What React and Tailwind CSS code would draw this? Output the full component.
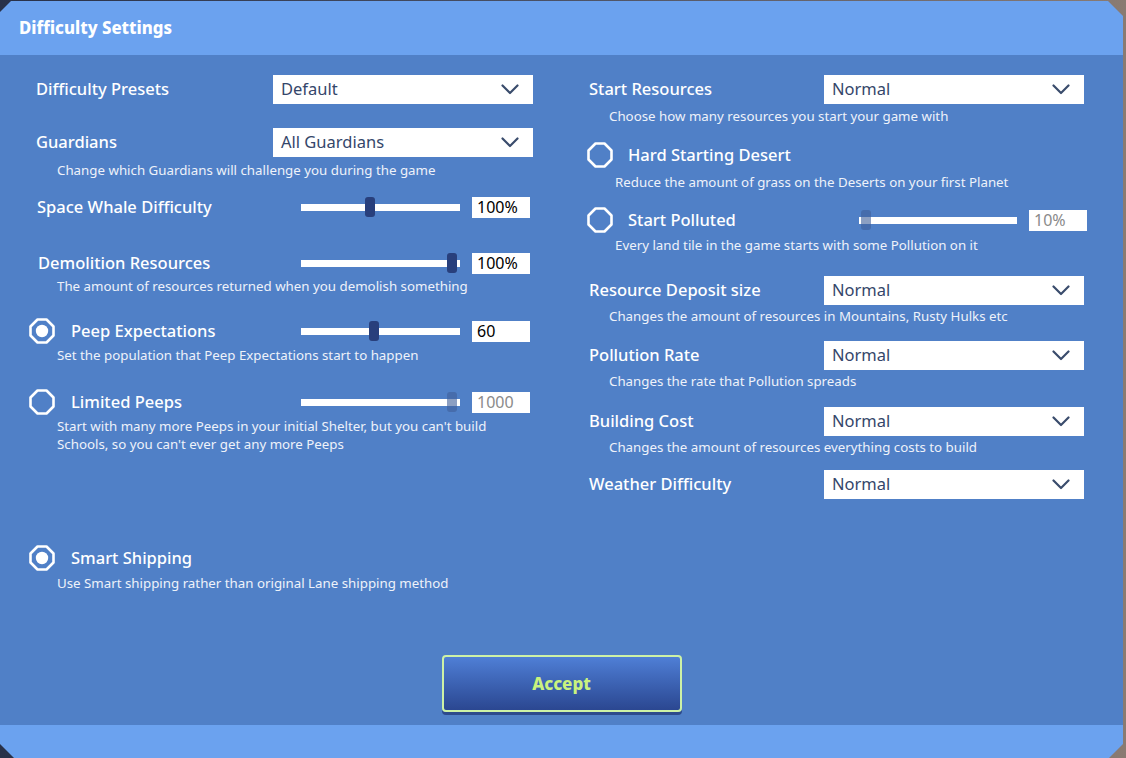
import React from 'react';

const FONT = { fontFamily: '"Noto Sans", "Open Sans", sans-serif' };

function Chevron() {
  return (
    <svg width="18" height="11" viewBox="0 0 18 11" className="shrink-0">
      <path d="M1.5 1.5 L9 9 L16.5 1.5" fill="none" stroke="#3a4c6c" strokeWidth="2.2" strokeLinecap="round" strokeLinejoin="round" />
    </svg>
  );
}

function Dropdown({ value }) {
  return (
    <div className="w-[260px] h-[29px] bg-white flex items-center justify-between pl-[8px] pr-[14px]">
      <span className="text-[16.5px] text-[#34466a]">{value}</span>
      <Chevron />
    </div>
  );
}

function Radio({ checked }) {
  return (
    <svg width="26" height="26" viewBox="0 0 26 26" className="shrink-0">
      <polygon points="8.5,1.5 17.5,1.5 24.5,8.5 24.5,17.5 17.5,24.5 8.5,24.5 1.5,17.5 1.5,8.5" fill="none" stroke="white" strokeWidth="2.6" strokeLinejoin="round" />
      {checked && <circle cx="13" cy="13" r="6.2" fill="white" />}
    </svg>
  );
}

function Slider({ pos, disabled, width = 159 }) {
  return (
    <div className="relative h-[22px] flex items-center" style={{ width }}>
      <div className="w-full h-[7px] bg-white" />
      <div
        className={
          'absolute top-[1px] w-[10px] h-[20px] rounded-[3px] ' +
          (disabled ? 'bg-[#3f5f9a]/60' : 'bg-[#283f7c]')
        }
        style={{ left: pos }}
      />
    </div>
  );
}

function ValueBox({ value, disabled }) {
  return (
    <div className="w-[58px] h-[21px] bg-white flex items-center pl-[5px]">
      <span className={'text-[16px] leading-none ' + (disabled ? 'text-[#8a8a8a]' : 'text-black')}>{value}</span>
    </div>
  );
}

function Desc({ children, className = '' }) {
  return <p className={'text-[13.3px] leading-[18px] text-[#eef2fa] ' + className}>{children}</p>;
}

const LABEL = 'text-[16.5px] font-medium';

export default function App() {
  return (
    <div className="w-[1126px] h-[758px] bg-gradient-to-r from-[#283149] via-[#4b5266] to-[#8a7b72] overflow-hidden" style={FONT}>
      <div className="w-[1123px] h-[758px] flex flex-col [clip-path:polygon(11px_1px,1108px_1px,1123px_16px,1123px_744px,1109px_758px,14px_758px,0_744px,0_12px)]">
        {/* Header */}
        <div className="h-[55px] bg-[#6ba2ef] flex items-center pl-[19px] shrink-0">
          <h1 className="text-[16.8px] font-extrabold text-white">Difficulty Settings</h1>
        </div>

        {/* Body */}
        <div className="flex-1 bg-[#5080c7] flex flex-col">
          <div className="h-[600px] flex">
            {/* Left column */}
            <div className="w-[586px] shrink-0 pl-[28px] pt-[20px] flex flex-col text-white">
              <div className="h-[29px] flex items-center">
                <span className={'w-[245px] pl-[8px] ' + LABEL}>Difficulty Presets</span>
                <Dropdown value="Default" />
              </div>

              <div className="h-[29px] mt-[24px] flex items-center">
                <span className={'w-[245px] pl-[8px] ' + LABEL}>Guardians</span>
                <Dropdown value="All Guardians" />
              </div>
              <Desc className="mt-[4px] pl-[29px]">Change which Guardians will challenge you during the game</Desc>

              <div className="h-[26px] mt-[15px] flex items-center">
                <span className={'w-[273px] pl-[9px] ' + LABEL}>Space Whale Difficulty</span>
                <Slider pos={64} />
                <div className="ml-[12px]"><ValueBox value="100%" /></div>
              </div>

              <div className="h-[26px] mt-[30px] flex items-center">
                <span className={'w-[273px] pl-[10px] ' + LABEL}>Demolition Resources</span>
                <Slider pos={146} />
                <div className="ml-[12px]"><ValueBox value="100%" /></div>
              </div>
              <Desc className="mt-[1px] pl-[29px]">The amount of resources returned when you demolish something</Desc>

              <div className="h-[26px] mt-[23px] flex items-center">
                <div className="w-[273px] flex items-center pl-[1px]">
                  <Radio checked />
                  <span className={'ml-[16px] ' + LABEL}>Peep Expectations</span>
                </div>
                <Slider pos={68} />
                <div className="ml-[12px]"><ValueBox value="60" /></div>
              </div>
              <Desc className="mt-[2px] pl-[29px]">Set the population that Peep Expectations start to happen</Desc>

              <div className="h-[26px] mt-[25px] flex items-center">
                <div className="w-[273px] flex items-center pl-[1px]">
                  <Radio />
                  <span className={'ml-[16px] ' + LABEL}>Limited Peeps</span>
                </div>
                <Slider pos={146} disabled />
                <div className="ml-[12px]"><ValueBox value="1000" disabled /></div>
              </div>
              <Desc className="mt-[2px] pl-[29px] w-[500px]">
                Start with many more Peeps in your initial Shelter, but you can't build Schools, so you can't ever get any more Peeps
              </Desc>

              <div className="h-[26px] mt-[92px] flex items-center pl-[1px]">
                <Radio checked />
                <span className={'ml-[16px] ' + LABEL}>Smart Shipping</span>
              </div>
              <Desc className="mt-[3px] pl-[29px]">Use Smart shipping rather than original Lane shipping method</Desc>
            </div>

            {/* Right column */}
            <div className="flex-1 pt-[20px] flex flex-col text-white">
              <div className="h-[29px] flex items-center">
                <span className={'w-[238px] pl-[3px] ' + LABEL}>Start Resources</span>
                <Dropdown value="Normal" />
              </div>
              <Desc className="mt-[3px] pl-[23px]">Choose how many resources you start your game with</Desc>

              <div className="h-[26px] mt-[17px] flex items-center pl-[1px]">
                <Radio />
                <span className={'ml-[15px] ' + LABEL}>Hard Starting Desert</span>
              </div>
              <Desc className="mt-[5px] pl-[29px]">Reduce the amount of grass on the Deserts on your first Planet</Desc>

              <div className="h-[26px] mt-[16px] flex items-center">
                <div className="w-[273px] flex items-center pl-[1px]">
                  <Radio />
                  <span className={'ml-[15px] ' + LABEL}>Start Polluted</span>
                </div>
                <Slider pos={2} width={158} disabled />
                <div className="ml-[12px]"><ValueBox value="10%" disabled /></div>
              </div>
              <Desc className="mt-[3px] pl-[29px]">Every land tile in the game starts with some Pollution on it</Desc>

              <div className="h-[29px] mt-[22px] flex items-center">
                <span className={'w-[238px] pl-[3px] ' + LABEL}>Resource Deposit size</span>
                <Dropdown value="Normal" />
              </div>
              <Desc className="mt-[2px] pl-[23px]">Changes the amount of resources in Mountains, Rusty Hulks etc</Desc>

              <div className="h-[29px] mt-[16px] flex items-center">
                <span className={'w-[238px] pl-[3px] ' + LABEL}>Pollution Rate</span>
                <Dropdown value="Normal" />
              </div>
              <Desc className="mt-[2px] pl-[23px]">Changes the rate that Pollution spreads</Desc>

              <div className="h-[29px] mt-[17px] flex items-center">
                <span className={'w-[238px] pl-[3px] ' + LABEL}>Building Cost</span>
                <Dropdown value="Normal" />
              </div>
              <Desc className="mt-[2px] pl-[23px]">Changes the amount of resources everything costs to build</Desc>

              <div className="h-[29px] mt-[14px] flex items-center">
                <span className={'w-[238px] pl-[3px] ' + LABEL}>Weather Difficulty</span>
                <Dropdown value="Normal" />
              </div>
            </div>
          </div>

          {/* Accept */}
          <div className="flex justify-center">
            <button className="w-[240px] h-[57px] rounded-[4px] border-2 border-[#cdf2a6] bg-gradient-to-b from-[#4f7fd6] to-[#2b4791] shadow-[0_3px_0_#2d4a8c] flex items-center justify-center">
              <span className="text-[17px] font-extrabold text-[#c9f27e]">Accept</span>
            </button>
          </div>
        </div>

        {/* Footer band */}
        <div className="h-[33px] bg-[#6ba2ef] shrink-0" />
      </div>
    </div>
  );
}
